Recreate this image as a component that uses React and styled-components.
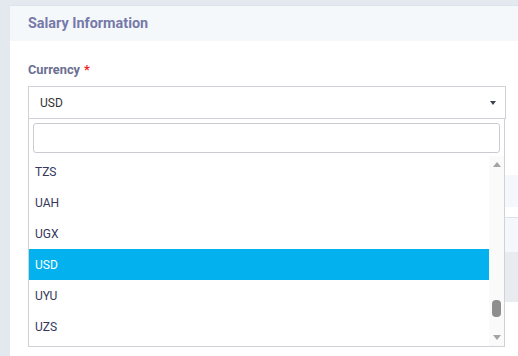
import styled, { createGlobalStyle } from "styled-components";

const GlobalStyle = createGlobalStyle`
  html, body {
    margin: 0;
    padding: 0;
    background: #e4e9f0;
    font-family: Roboto, "Liberation Sans", sans-serif;
  }
`;

const Page = styled.div`
  width: 518px;
  height: 356px;
  padding: 5px 0 0 10px;
  box-sizing: border-box;
  overflow: hidden;
`;

const Card = styled.section`
  width: 520px;
  height: 360px;
  background: #fff;
  border-top: 1px solid #dde3ea;
`;

const CardHeader = styled.div`
  height: 35px;
  display: flex;
  align-items: center;
  padding-left: 18px;
  background: #f5f8fb;

  h3 {
    margin: 0;
    font-size: 14.4px;
    font-weight: 700;
    color: #7679aa;
  }
`;

const CardBody = styled.div`
  padding: 21px 0 0 18px;
`;

const Label = styled.label`
  display: block;
  font-size: 12.8px;
  font-weight: 700;
  color: #6c6f92;
  margin-bottom: 9px;
  line-height: 15px;

  span {
    color: #f21f1f;
    margin-left: 4px;
  }
`;

const SelectWrap = styled.div`
  position: relative;
  width: 478px;
`;

const SelectBox = styled.div`
  height: 33px;
  box-sizing: border-box;
  border: 1px solid #cfd3d8;
  display: flex;
  align-items: center;
  justify-content: space-between;
  padding: 0 9px 0 11px;
  font-size: 12px;
  color: #333;
`;

const Caret = styled.i`
  width: 0;
  height: 0;
  border-left: 3px solid transparent;
  border-right: 3px solid transparent;
  border-top: 4px solid #3d4450;
  margin-top: 1px;
`;

const Dropdown = styled.div`
  position: absolute;
  top: 100%;
  left: 0;
  width: 477px;
  box-sizing: border-box;
  margin-top: -1px;
  background: #fff;
  border: 1px solid #cfd3d8;
  z-index: 5;
`;

const SearchRow = styled.div`
  padding: 4px 4px 3px;

  input {
    display: block;
    width: 100%;
    height: 30px;
    box-sizing: border-box;
    border: 1px solid #c9cdd2;
    border-radius: 3px;
    outline: none;
  }
`;

const ListArea = styled.div`
  display: flex;
  height: 190px;
`;

const Options = styled.ul`
  flex: 1;
  margin: 0;
  padding: 0;
  list-style: none;
  overflow: hidden;
`;

const Option = styled.li`
  height: 31px;
  display: flex;
  align-items: center;
  padding-left: 6px;
  font-size: 12px;
  color: ${(props) => (props.$active ? "#fff" : "#35385a")};
  background: ${(props) => (props.$active ? "#02b1ee" : "transparent")};
`;

const Scrollbar = styled.div`
  width: 15px;
  background: #fafafa;
  display: flex;
  flex-direction: column;
  align-items: center;
  padding: 6px 0 6px;
  box-sizing: border-box;
`;

const Arrow = styled.i`
  width: 0;
  height: 0;
  border-left: 4px solid transparent;
  border-right: 4px solid transparent;
  ${(props) =>
    props.$up ? "border-bottom: 5px solid #a3a3a3;" : "border-top: 5px solid #a3a3a3;"}
`;

const Track = styled.div`
  flex: 1;
  width: 100%;
  display: flex;
  justify-content: center;
  padding-top: 133px;
  box-sizing: border-box;
`;

const Thumb = styled.div`
  width: 9px;
  height: 17px;
  border-radius: 4px;
  background: #8e8e8e;
`;

const Behind = styled.div`
  margin-top: 56px;
`;

const Band = styled.div`
  height: ${(props) => props.$h}px;
  background: ${(props) => props.$bg};
  border-top: ${(props) => (props.$line ? "1px solid #dde2e8" : "none")};
  margin-top: ${(props) => props.$mt || 0}px;
`;

const options = ["TZS", "UAH", "UGX", "USD", "UYU", "UZS"];

export default function App() {
  return (
    <>
      <GlobalStyle />
      <Page>
        <Card>
          <CardHeader>
            <h3>Salary Information</h3>
          </CardHeader>
          <CardBody>
            <Label>
              Currency<span>*</span>
            </Label>
            <SelectWrap>
              <SelectBox>
                USD
                <Caret />
              </SelectBox>
              <Dropdown>
                <SearchRow>
                  <input type="text" />
                </SearchRow>
                <ListArea>
                  <Options>
                    {options.map((code) => (
                      <Option key={code} $active={code === "USD"}>
                        {code}
                      </Option>
                    ))}
                  </Options>
                  <Scrollbar>
                    <Arrow $up />
                    <Track>
                      <Thumb />
                    </Track>
                    <Arrow />
                  </Scrollbar>
                </ListArea>
              </Dropdown>
            </SelectWrap>
            <Behind>
              <Band $h={32} $bg="#f4f7fb" />
              <Band $h={34} $bg="#f4f7fb" $line $mt={10} />
              <Band $h={50} $bg="#e8ecf0" />
            </Behind>
          </CardBody>
        </Card>
      </Page>
    </>
  );
}
